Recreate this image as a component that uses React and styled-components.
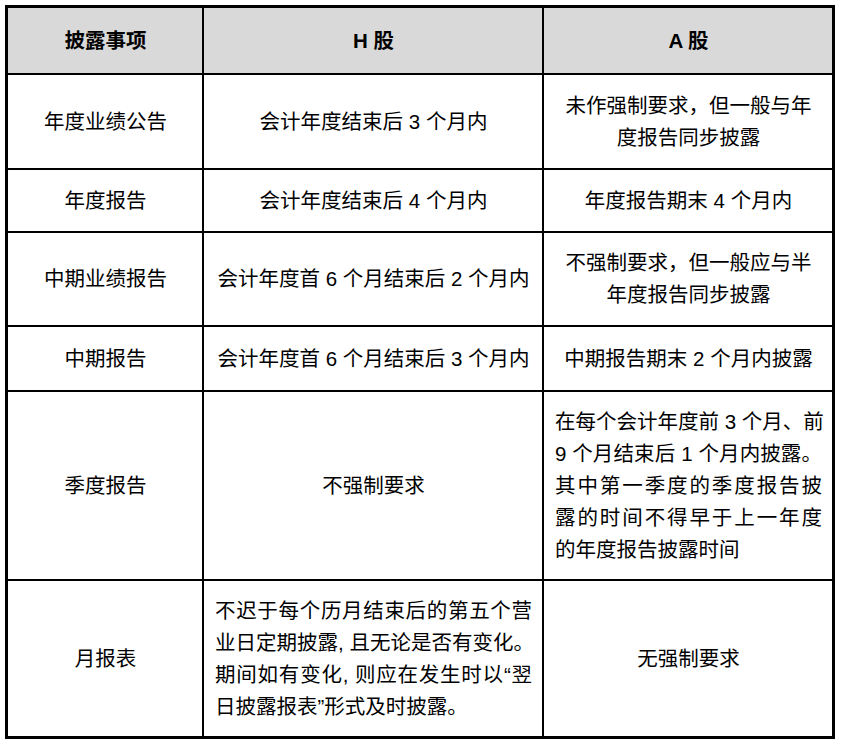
import styled, { createGlobalStyle } from "styled-components";

const GlobalStyle = createGlobalStyle`
  html, body {
    margin: 0;
    padding: 0;
    background: #ffffff;
  }
  body {
    font-family: "Liberation Sans", "Noto Sans CJK SC", sans-serif;
    color: #000000;
  }
`;

const Page = styled.div`
  padding: 5px 0 0 5px;
`;

const Table = styled.div`
  width: 824px;
  border: 3px double #000000;
  display: grid;
  grid-template-columns: 194px 338px 288px;
  grid-template-rows: 65px 93px 61px 92px 63px 187px 155px;
  gap: 2px;
  background: #000000;
`;

const Cell = styled.div`
  background: ${props => (props.$head ? "#d9d9d9" : "#ffffff")};
  display: flex;
  align-items: center;
  justify-content: center;
  text-align: center;
  padding: 0 10px 0 11px;
  font-size: 20.5px;
  line-height: 32px;
  font-weight: ${props => (props.$head ? 700 : 400)};
  white-space: nowrap;
`;

const Block = styled.div`
  width: 100%;
`;

const Line = styled.div`
  text-align: ${props => (props.$full ? "justify" : "left")};
  text-align-last: ${props => (props.$full ? "justify" : "left")};
  white-space: nowrap;
`;

const Lines = ({ lines }) => (
  <Block>
    {lines.map((line, i) => (
      <Line key={i} $full={i < lines.length - 1}>
        {line}
      </Line>
    ))}
  </Block>
);

const rows = [
  [
    "年度业绩公告",
    "会计年度结束后 3 个月内",
    <>
      未作强制要求，但一般与年
      <br />
      度报告同步披露
    </>
  ],
  ["年度报告", "会计年度结束后 4 个月内", "年度报告期末 4 个月内"],
  [
    "中期业绩报告",
    "会计年度首 6 个月结束后 2 个月内",
    <>
      不强制要求，但一般应与半
      <br />
      年度报告同步披露
    </>
  ],
  ["中期报告", "会计年度首 6 个月结束后 3 个月内", "中期报告期末 2 个月内披露"],
  [
    "季度报告",
    "不强制要求",
    <Lines
      lines={[
        "在每个会计年度前 3 个月、前",
        "9 个月结束后 1 个月内披露。",
        "其中第一季度的季度报告披",
        "露的时间不得早于上一年度",
        "的年度报告披露时间"
      ]}
    />
  ],
  [
    "月报表",
    <Lines
      lines={[
        "不迟于每个历月结束后的第五个营",
        "业日定期披露, 且无论是否有变化。",
        "期间如有变化, 则应在发生时以“翌",
        "日披露报表”形式及时披露。"
      ]}
    />,
    "无强制要求"
  ]
];

const App = () => (
  <Page>
    <GlobalStyle />
    <Table>
      <Cell $head>披露事项</Cell>
      <Cell $head>H 股</Cell>
      <Cell $head>A 股</Cell>
      {rows.map((row, r) =>
        row.map((content, c) => <Cell key={`${r}-${c}`}>{content}</Cell>)
      )}
    </Table>
  </Page>
);

export default App;
